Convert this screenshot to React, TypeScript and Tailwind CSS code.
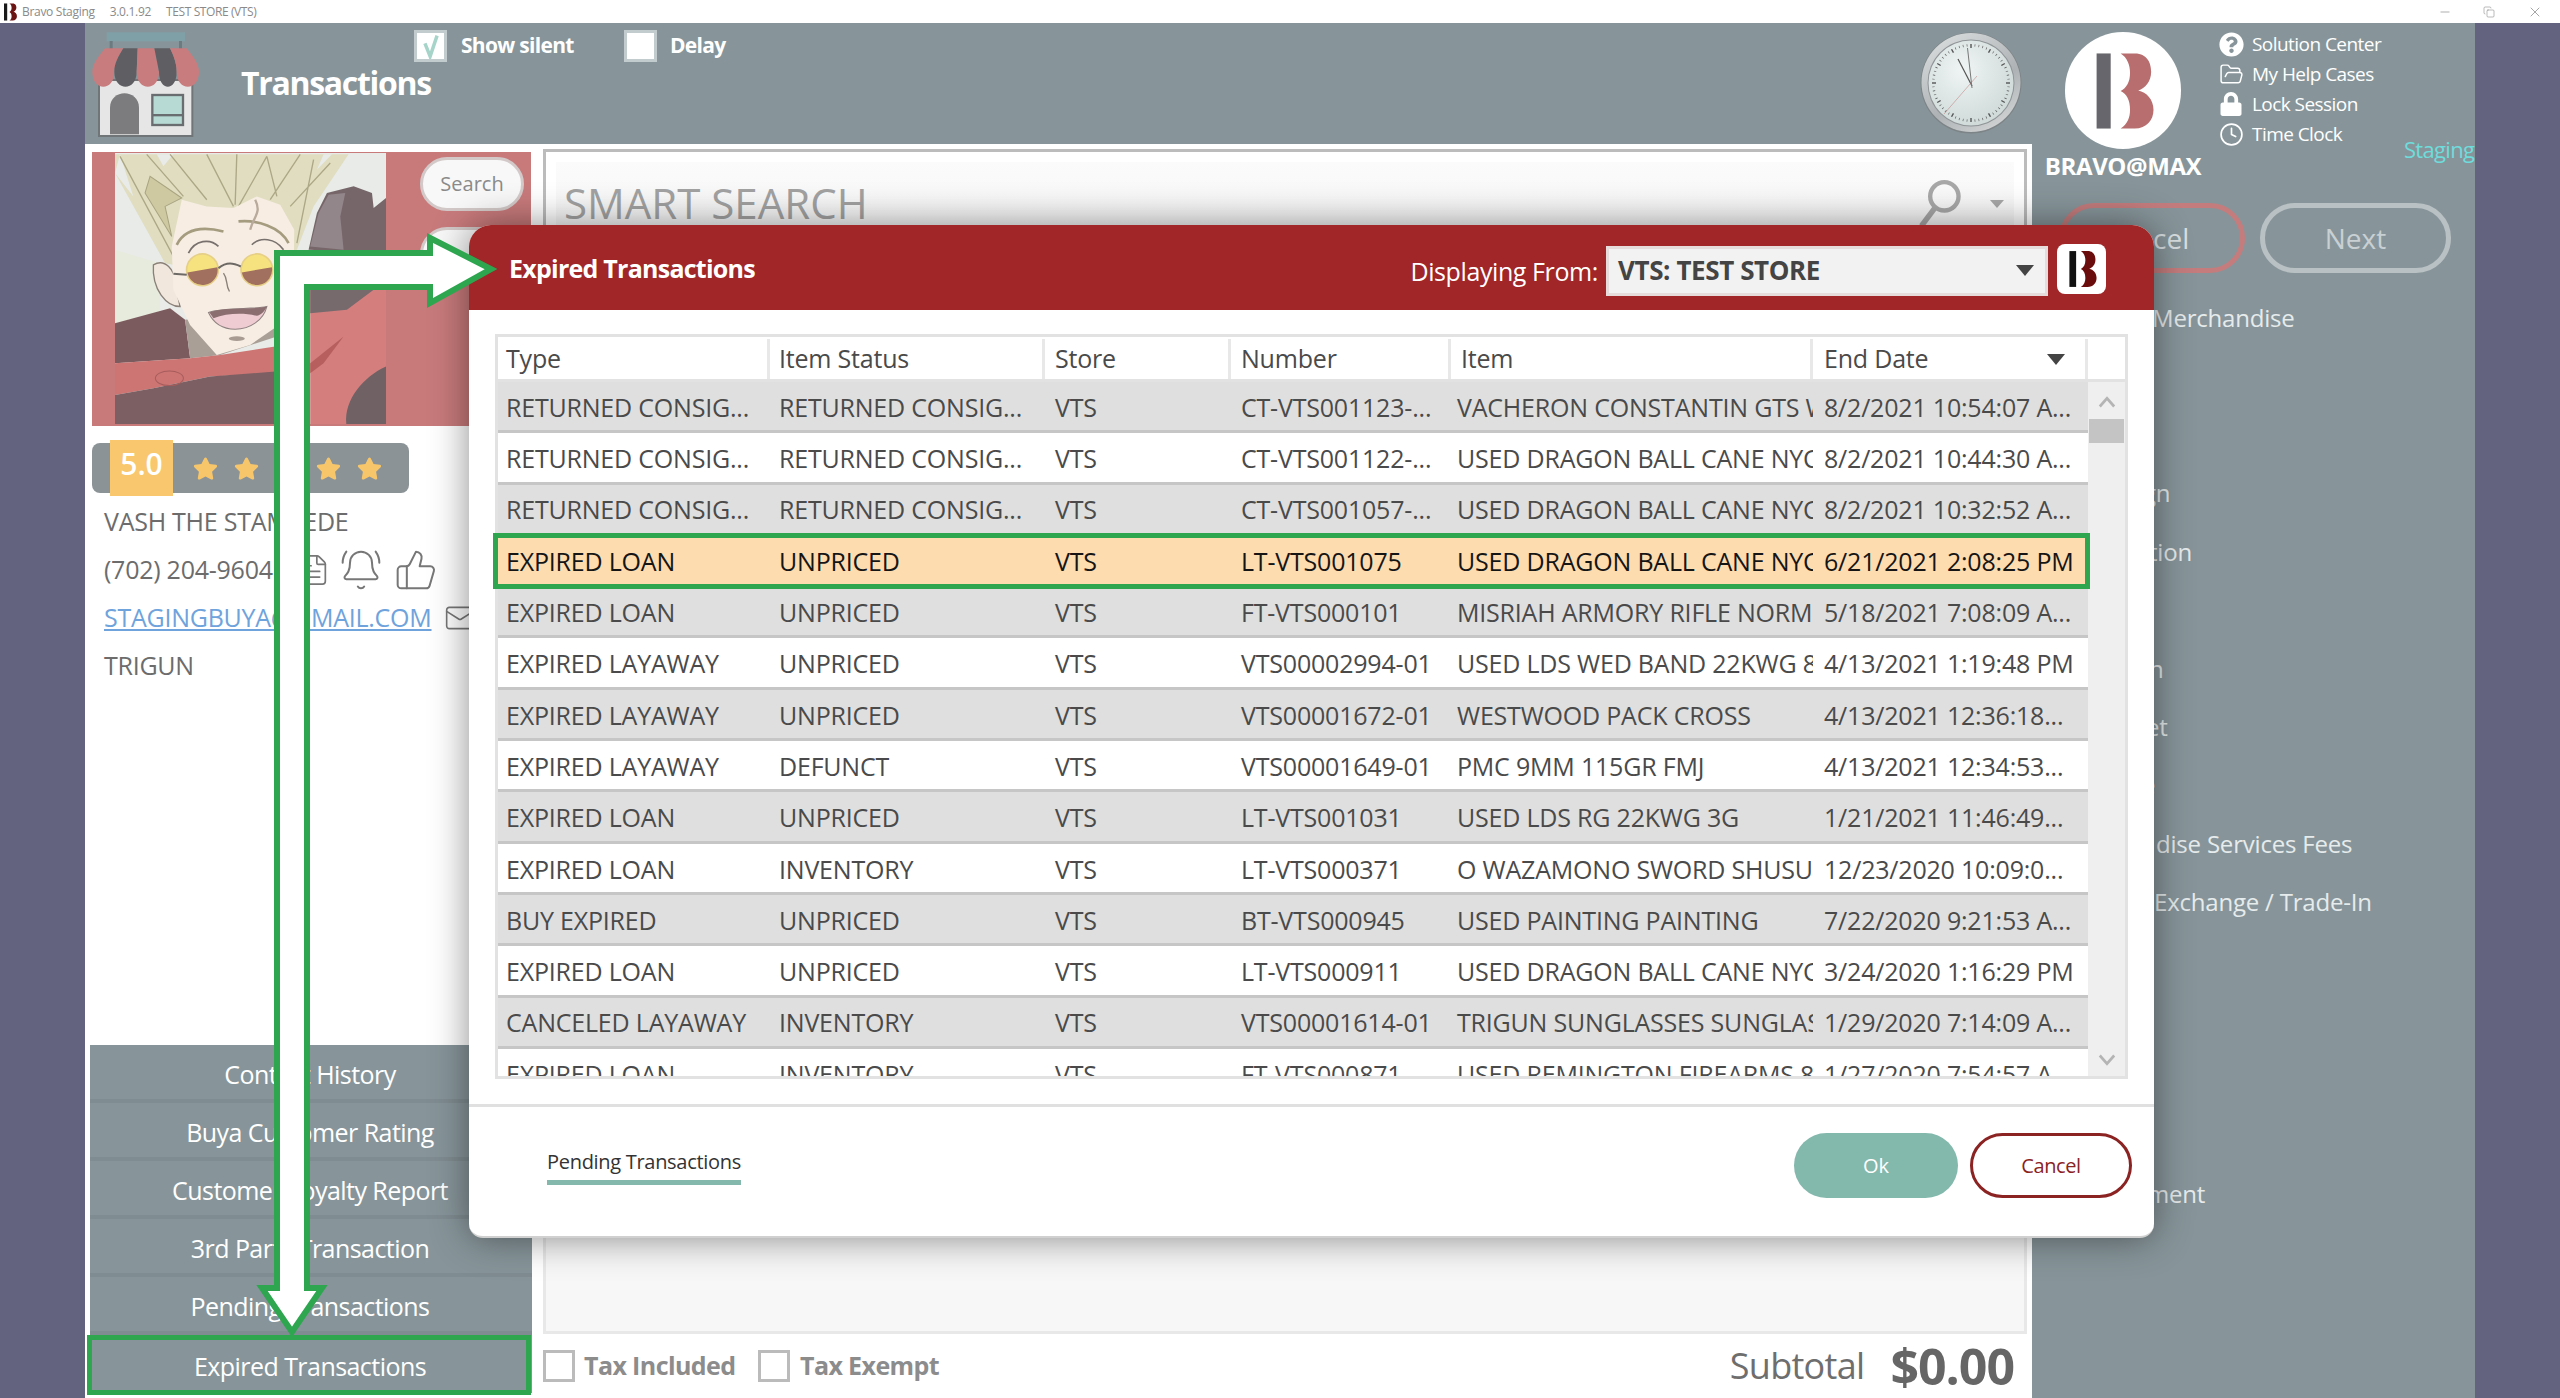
import React from "react";
import { BellRing, ThumbsUp, Mail, FileText, FolderOpen, Clock, Minus, X, Copy } from "lucide-react";
import { FaQuestionCircle, FaLock, FaStar } from "react-icons/fa";

const cols = ["w-[272px] pl-[8px]", "w-[275px] pl-[9px]", "w-[186px] pl-[10px]", "w-[220px] pl-[10px]", "w-[362px] pl-[6px]", "w-[275px] pl-[11px]"];

const rows: string[][] = [
  ["RETURNED CONSIG...", "RETURNED CONSIG...", "VTS", "CT-VTS001123-...", "VACHERON CONSTANTIN GTS WATCH", "8/2/2021 10:54:07 A..."],
  ["RETURNED CONSIG...", "RETURNED CONSIG...", "VTS", "CT-VTS001122-...", "USED DRAGON BALL CANE NYC STICK", "8/2/2021 10:44:30 A..."],
  ["RETURNED CONSIG...", "RETURNED CONSIG...", "VTS", "CT-VTS001057-...", "USED DRAGON BALL CANE NYC STICK", "8/2/2021 10:32:52 A..."],
  ["EXPIRED LOAN", "UNPRICED", "VTS", "LT-VTS001075", "USED DRAGON BALL CANE NYC STICK", "6/21/2021 2:08:25 PM"],
  ["EXPIRED LOAN", "UNPRICED", "VTS", "FT-VTS000101", "MISRIAH ARMORY RIFLE NORM AR15", "5/18/2021 7:08:09 A..."],
  ["EXPIRED LAYAWAY", "UNPRICED", "VTS", "VTS00002994-01", "USED LDS WED BAND 22KWG 8G", "4/13/2021 1:19:48 PM"],
  ["EXPIRED LAYAWAY", "UNPRICED", "VTS", "VTS00001672-01", "WESTWOOD PACK CROSS", "4/13/2021 12:36:18..."],
  ["EXPIRED LAYAWAY", "DEFUNCT", "VTS", "VTS00001649-01", "PMC 9MM 115GR FMJ", "4/13/2021 12:34:53..."],
  ["EXPIRED LOAN", "UNPRICED", "VTS", "LT-VTS001031", "USED LDS RG 22KWG 3G", "1/21/2021 11:46:49..."],
  ["EXPIRED LOAN", "INVENTORY", "VTS", "LT-VTS000371", "O WAZAMONO SWORD SHUSUI BLADE", "12/23/2020 10:09:0..."],
  ["BUY EXPIRED", "UNPRICED", "VTS", "BT-VTS000945", "USED PAINTING PAINTING", "7/22/2020 9:21:53 A..."],
  ["EXPIRED LOAN", "UNPRICED", "VTS", "LT-VTS000911", "USED DRAGON BALL CANE NYC STICK", "3/24/2020 1:16:29 PM"],
  ["CANCELED LAYAWAY", "INVENTORY", "VTS", "VTS00001614-01", "TRIGUN SUNGLASSES SUNGLASSES", "1/29/2020 7:14:09 A..."],
  ["EXPIRED LOAN", "INVENTORY", "VTS", "FT-VTS000871", "USED REMINGTON FIREARMS 870 EXP", "1/27/2020 7:54:57 A..."],
];

const nav = ["Contact History", "Buya Customer Rating", "Customer Loyalty Report", "3rd Party Transaction", "Pending Transactions", "Expired Transactions"];

const sideList: [string, string][] = [
  ["Merchandise", "pl-[120px]"],
  ["", ""],
  ["", ""],
  ["gn", "pl-[111px]"],
  ["tion", "pl-[117px]"],
  ["", ""],
  ["n", "pl-[117px]"],
  ["et", "pl-[114px]"],
  ["e", "pl-[110px]"],
  ["dise Services Fees", "pl-[124px]"],
  ["Exchange / Trade-In", "pl-[122px]"],
  ["", ""],
  ["", ""],
  ["", ""],
  ["", ""],
  ["ment", "pl-[115px]"],
];

function BLogo({ bar, b, className }: { bar: string; b: string; className?: string }) {
  return (
    <svg viewBox="0 0 240 300" className={className}>
      <rect x="30" y="22" width="48" height="256" fill={bar} />
      <path
        d="M112 22 H160 C205 22 216 58 216 84 C216 118 195 140 172 148 C200 154 224 178 224 214 C224 250 200 278 160 278 H112 C136 262 144 240 144 214 C144 180 132 160 112 150 C132 140 144 120 144 88 C144 60 134 36 112 22 Z"
        fill={b}
      />
    </svg>
  );
}

function StoreIcon() {
  return (
    <svg viewBox="0 0 390 360" className="w-[130px] h-[120px] -ml-[5px] -mt-[7px]" preserveAspectRatio="none">
      <rect x="65" y="22" width="235" height="27" fill="#7fa0a6" />
      <rect x="74" y="48" width="9" height="24" fill="#6b7b80" />
      <rect x="282" y="48" width="9" height="24" fill="#6b7b80" />
      <rect x="42" y="165" width="280" height="168" fill="#e6e6e6" stroke="#707678" strokeWidth="6" />
      <path d="M75 328 V248 C75 190 162 190 162 248 V328 Z" fill="#7c7c7e" />
      <rect x="202" y="210" width="92" height="90" fill="#b8dad4" stroke="#6a6d70" strokeWidth="7" />
      <rect x="202" y="267" width="92" height="7" fill="#6a6d70" />
      <path d="M60 70 H115 C100 95 90 115 88 140 C88 200 22 200 22 140 C22 115 45 90 60 70 Z" fill="#c97c7e" />
      <path d="M115 70 H158 L155 140 C155 200 88 200 88 140 C88 115 100 95 115 70 Z" fill="#5f5f63" />
      <path d="M158 70 H208 L222 140 C222 200 155 200 155 140 Z" fill="#c97c7e" />
      <path d="M208 70 H255 C265 90 275 115 275 140 C275 200 222 200 222 140 Z" fill="#5f5f63" />
      <path d="M255 70 H305 C320 90 342 115 342 140 C342 200 275 200 275 140 C275 115 265 90 255 70 Z" fill="#c97c7e" />
    </svg>
  );
}

function ClockFace() {
  const ticks = Array.from({ length: 60 }, (_, i) => i);
  return (
    <svg viewBox="0 0 102 102" className="w-[102px] h-[102px]">
      <defs>
        <linearGradient id="rim" x1="0.2" y1="0" x2="0.8" y2="1">
          <stop offset="0" stopColor="#d9dcdd" />
          <stop offset="0.6" stopColor="#aeb2b4" />
          <stop offset="1" stopColor="#d4d6d7" />
        </linearGradient>
        <radialGradient id="face" cx="0.4" cy="0.35" r="0.8">
          <stop offset="0" stopColor="#eff5f4" />
          <stop offset="1" stopColor="#c9d5d4" />
        </radialGradient>
      </defs>
      <circle cx="51" cy="51" r="50.5" fill="#7d8487" />
      <circle cx="51" cy="50.5" r="49.5" fill="url(#rim)" />
      <circle cx="51" cy="51" r="43.5" fill="#8f9496" />
      <circle cx="51" cy="51" r="42.5" fill="url(#face)" />
      {ticks.map((i) => (
        <rect key={i} x={i % 5 === 0 ? 50.3 : 50.7} y="12" width={i % 5 === 0 ? 1.4 : 0.6} height={i % 5 === 0 ? 4 : 2.4} fill="#555" transform={`rotate(${i * 6} 51 51)`} />
      ))}
      <line x1="52" y1="54" x2="38" y2="27" stroke="#555" strokeWidth="1.2" />
      <line x1="52" y1="56" x2="47.5" y2="16" stroke="#777" strokeWidth="1" />
      <line x1="57" y1="44" x2="24" y2="82" stroke="#b77" strokeWidth="0.5" />
    </svg>
  );
}

function Photo() {
  return (
    <svg viewBox="15 10 812 812" className="w-[271px] h-[271px]">
      <rect x="15" y="10" width="812" height="812" fill="#e8ebe8" />
      <path d="M15 300 L150 340 V500 L15 525 Z" fill="#e6ebde" />
      <path d="M595 300 L620 190 L650 130 L730 110 L785 130 L790 175 L827 145 V310 Z" fill="#76666a" />
      <path d="M600 290 L625 190 L655 135 L705 130 L690 200 L700 300 Z" fill="#93868a" />
      <path d="M165 340 L15 70 L15 14 L715 14 L610 170 L560 300 L190 345 Z" fill="#e0ddc0" />
      <path d="M15 70 L70 140 L30 14 Z M140 14 L160 50 L190 14 Z M640 14 L620 60 L665 14 Z" fill="#e8ebe8" />
      <path d="M120 80 L105 130 L185 260 L165 170 L215 145 Z" fill="#cfc9a2" stroke="#a9a480" strokeWidth="3" />
      <path d="M30 20 L190 320 M110 14 L220 140 M180 14 L290 150 M290 14 L370 170 M380 14 L375 165 M470 20 L500 140 M470 20 L385 170 M570 14 L480 150 M660 40 L540 170 M610 30 L560 280" stroke="#aca784" strokeWidth="4" fill="none" />
      <path d="M15 520 L180 475 L225 510 L240 625 L15 640 Z" fill="#7c5b5e" />
      <path d="M130 345 C165 325 195 360 195 400 L210 470 C170 470 125 420 130 345 Z" fill="#f2e7dd" stroke="#8a8078" strokeWidth="4" />
      <path d="M225 510 L240 625 L330 615 L500 560 V470 Z" fill="#a99f97" />
      <path d="M215 150 L290 170 L370 175 L440 140 L510 165 L552 240 L550 460 L500 530 L420 585 L320 615 L240 525 L190 420 L185 290 Z" fill="#f7ede3" />
      <path d="M200 285 C225 235 280 230 340 245 M385 215 C440 210 510 230 535 280" stroke="#a59c80" strokeWidth="8" fill="none" />
      <path d="M235 310 C255 270 300 265 325 290 M425 285 C450 260 495 265 520 300" stroke="#77706c" strokeWidth="5" fill="none" />
      <path d="M435 150 C455 190 430 200 420 240" stroke="#b8ab9b" strokeWidth="7" fill="none" />
      <circle cx="277" cy="360" r="50" fill="#e6cf87" />
      <circle cx="277" cy="360" r="45" fill="#f6e27e" />
      <path d="M232 368 L322 352 A45 45 0 0 1 232 368 Z" fill="#a2705e" />
      <circle cx="440" cy="360" r="50" fill="#e6cf87" />
      <circle cx="440" cy="360" r="45" fill="#f6e27e" />
      <path d="M395 368 L485 352 A45 45 0 0 1 395 368 Z" fill="#a2705e" />
      <path d="M325 355 C350 335 370 340 392 350 M190 372 L230 375" stroke="#6d6a66" strokeWidth="6" fill="none" />
      <path d="M340 370 C355 390 345 405 358 425" stroke="#8a8078" strokeWidth="4" fill="none" />
      <path d="M295 488 C340 470 430 480 470 470 C460 510 420 538 375 538 C335 538 310 520 295 488 Z" fill="#efccd2" stroke="#8e8280" strokeWidth="3" />
      <path d="M298 488 C340 470 430 480 470 470 C462 488 452 495 440 498 C400 488 350 490 310 505 Z" fill="#8b6e70" />
      <ellipse cx="380" cy="566" rx="24" ry="7" fill="#a89b92" />
      <path d="M15 640 L240 625 L330 615 L495 590 V670 L300 680 L130 715 L15 735 Z" fill="#cc7573" />
      <path d="M15 735 L130 715 L300 680 L495 665 V822 H15 Z" fill="#7c5f62" />
      <ellipse cx="178" cy="685" rx="42" ry="22" fill="none" stroke="#a75c5c" strokeWidth="3" />
      <path d="M600 420 H827 V822 H600 Z" fill="#d47f7e" />
      <path d="M600 420 H790 L710 480 L600 490 Z" fill="#776a6d" />
      <path d="M827 650 C760 680 700 750 708 822 H827 Z" fill="#6f6164" />
      <path d="M600 640 L700 560 L640 640 L600 670 Z" fill="#b65f5e" />
    </svg>
  );
}

function Check({ className = "", on = false }: { className?: string; on?: boolean }) {
  return (
    <div className={`flex items-center justify-center bg-white ${className}`}>
      {on && (
        <svg viewBox="0 0 30 30" className="w-[26px] h-[26px]">
          <path d="M8 12 L14 27 L22 3" fill="none" stroke="#a6d4c9" strokeWidth="4" />
        </svg>
      )}
    </div>
  );
}

export default function App() {
  return (
    <div className="relative w-[2560px] h-[1398px] overflow-hidden bg-[#63637f] font-['Open_Sans',sans-serif]">
      {/* Title bar */}
      <div className="flex h-[23px] items-center bg-white text-[#8a8a8a]">
        <BLogo bar="#1a1a1a" b="#6b1414" className="ml-[2px] w-[16px] h-[20px]" />
        <span className="ml-[4px] text-[12px] tracking-[-0.3px]">Bravo Staging</span>
        <span className="ml-[15px] text-[12px] tracking-[-0.3px]">3.0.1.92</span>
        <span className="ml-[15px] text-[12px] tracking-[-0.4px]">TEST STORE (VTS)</span>
        <div className="ml-auto flex items-center text-[#777]">
          <Minus size={14} strokeWidth={1} className="mr-[31px]" />
          <Copy size={12} strokeWidth={1} className="mr-[32px]" />
          <X size={16} strokeWidth={1} className="mr-[17px]" />
        </div>
      </div>

      <div className="flex h-[1375px] pl-[85px] pr-[85px]">
        {/* Left + centre */}
        <div className="flex flex-col w-[1947px]">
          {/* Header */}
          <div className="flex h-[121px] bg-[#87959a]">
            <div className="ml-[5px] mt-[9px] w-[108px]">
              <StoreIcon />
            </div>
            <div className="ml-[43px] flex flex-col">
              <div className="flex items-center pl-[173px] pt-[7px] h-[39px]">
                <Check on className="w-[33px] h-[32px] border-[3px] border-[#c2cbce]" />
                <span className="ml-[14px] w-[163px] text-[21px] font-bold text-white tracking-[-0.7px]">Show silent</span>
                <Check className="w-[33px] h-[32px] border-[3px] border-[#c2cbce]" />
                <span className="ml-[13px] text-[21px] font-bold text-white tracking-[-0.7px]">Delay</span>
              </div>
              <div className="text-[32px] leading-[42px] font-bold text-white tracking-[-1.3px]">Transactions</div>
            </div>
            <div className="ml-auto mr-[10px] mt-[9px]">
              <ClockFace />
            </div>
          </div>

          {/* Body */}
          <div className="flex flex-1 bg-white">
            {/* Left panel */}
            <div className="flex flex-col w-[452px]">
              <div className="ml-[7px] mt-[8px] flex w-[439px] h-[274px] bg-[#c87a7b]">
                <div className="ml-[23px] mt-[1px]">
                  <Photo />
                </div>
                <div className="ml-[34px] mt-[5px] flex flex-col gap-[16px]">
                  <div className="flex items-center justify-center w-[104px] h-[54px] rounded-full bg-[#f8f8f8] border-[3px] border-[#d3c9c9] text-[20px] text-[#8a8a8a]">Search</div>
                  <div className="w-[104px] h-[54px] rounded-full bg-[#f8f8f8] border-[3px] border-[#d3c9c9]" />
                </div>
              </div>

              <div className="relative ml-[7px] mt-[17px] flex items-center w-[317px] h-[50px] rounded-[8px] bg-[#8b9397]">
                <div className="absolute left-[18px] -top-[3px] flex items-center justify-center w-[63px] h-[56px] pb-[10px] bg-[#f9c76e] text-[30px] font-semibold text-white">5.0</div>
                <div className="flex items-center gap-[16px] pl-[101px] text-[#f8c66a]">
                  <FaStar size={25} />
                  <FaStar size={25} />
                  <FaStar size={25} />
                  <FaStar size={25} />
                  <FaStar size={25} />
                </div>
              </div>

              <div className="mt-[5px] pl-[19px] text-[25px] text-[#6c6c6c] tracking-[-0.25px]">
                <div className="flex items-center h-[48px]">VASH THE STAMPEDE</div>
                <div className="flex items-center h-[48px]">
                  <span>(702) 204-9604</span>
                  <FileText size={34} strokeWidth={1.2} className="ml-[24px] text-[#777]" />
                  <BellRing size={44} strokeWidth={1.1} className="ml-[8px] text-[#777]" />
                  <ThumbsUp size={44} strokeWidth={1.1} className="ml-[11px] text-[#777]" />
                </div>
                <div className="flex items-center h-[48px]">
                  <span className="w-[340px] text-[#6fa3dc] underline">STAGINGBUYA@GMAIL.COM</span>
                  <Mail size={32} strokeWidth={1.2} className="text-[#777]" />
                </div>
                <div className="flex items-center h-[48px]">TRIGUN</div>
              </div>

              <div className="mt-auto mb-[5px] mx-[5px] flex flex-col">
                {nav.map((n, i) => (
                  <div key={n} className={`relative flex items-center justify-center h-[58px] pt-[6px] pr-[2px] bg-[#87959a] text-[25px] text-white tracking-[-0.55px] ${i < 5 ? "border-b-[4px] border-[#7f8c91]" : ""}`}>
                    {n}
                    {i === 5 && <div className="absolute -left-[3px] right-[1px] top-0 -bottom-[2px] border-[5px] border-[#2ea650]" />}
                  </div>
                ))}
              </div>
            </div>

            {/* Centre */}
            <div className="flex flex-col w-[1495px] pl-[6px] pr-[5px] pt-[5px]">
              <div className="h-[150px] border-[3px] border-[#bcbcbc] p-[10px]">
                <div className="flex h-[126px] bg-gradient-to-b from-[#fbfbfb] to-[#f2f2f2]">
                  <div className="pl-[8px] pt-[9px] text-[42px] text-[#a2a2a2]">SMART SEARCH</div>
                  <svg viewBox="0 0 40 44" className="ml-auto mt-[18px] w-[44px] h-[48px]">
                    <circle cx="24" cy="15" r="13" fill="none" stroke="#a8a8a8" strokeWidth="4" />
                    <line x1="15" y1="26" x2="3" y2="42" stroke="#a8a8a8" strokeWidth="5" />
                  </svg>
                  <svg viewBox="0 0 14 8" className="ml-[28px] mr-[10px] mt-[38px] w-[14px] h-[8px]">
                    <path d="M0 0 H14 L7 8 Z" fill="#a8a8a8" />
                  </svg>
                </div>
              </div>
              <div className="flex-1 bg-[#f7f7f7] border-[3px] border-[#e8e8e8]" />
              <div className="flex items-center h-[64px] shrink-0">
                <Check className="w-[32px] h-[32px] border-[3px] border-[#bbbbbb]" />
                <span className="ml-[9px] w-[174px] text-[25px] font-bold text-[#8c8c8c] tracking-[-0.6px]">Tax Included</span>
                <Check className="w-[32px] h-[32px] border-[3px] border-[#bbbbbb]" />
                <span className="ml-[10px] text-[25px] font-bold text-[#8c8c8c] tracking-[-0.6px]">Tax Exempt</span>
                <span className="ml-auto text-[36px] text-[#6e6e6e] tracking-[-0.7px]">Subtotal</span>
                <span className="ml-[26px] mr-[13px] text-[50px] font-bold text-[#666] tracking-[-1px]">$0.00</span>
              </div>
            </div>
          </div>
        </div>

        {/* Right column */}
        <div className="flex flex-col w-[443px] bg-[#87959a]">
          <div className="flex h-[180px] shrink-0">
            <div className="ml-[14px] flex flex-col items-center w-[154px]">
              <div className="mt-[9px] flex items-center justify-center w-[116px] h-[117px] rounded-full bg-white">
                <BLogo bar="#66666c" b="#b86e6e" className="w-[78px] h-[88px]" />
              </div>
              <div className="mt-[2px] text-[24px] leading-[30px] font-bold text-white tracking-[-0.4px]">BRAVO@MAX</div>
            </div>
            <div className="ml-[19px] w-[185px] pt-[6px] text-[19px] text-white tracking-[-0.55px]">
              <div className="flex items-center h-[30.2px]"><FaQuestionCircle size={25} /><span className="ml-[8px]">Solution Center</span></div>
              <div className="flex items-center h-[30.2px]"><FolderOpen size={25} strokeWidth={1.4} /><span className="ml-[8px]">My Help Cases</span></div>
              <div className="flex items-center h-[30.2px]"><FaLock size={24} /><span className="ml-[9px]">Lock Session</span></div>
              <div className="flex items-center h-[30.2px]"><Clock size={25} strokeWidth={1.6} /><span className="ml-[8px]">Time Clock</span></div>
            </div>
            <div className="w-[71px] pt-[110px] text-[22px] text-[#6fdcdc] tracking-[-0.7px]">Staging</div>
          </div>
          <div className="flex gap-[15px] pl-[27px]">
            <div className="flex items-center justify-center w-[186px] h-[70px] pr-[12px] rounded-full border-[5px] border-[#c47c7d] text-[28px] text-[#d9dfe1]">Cancel</div>
            <div className="flex items-center justify-center w-[191px] h-[70px] rounded-full border-[5px] border-[#b9c1c4] text-[28px] text-[#c9d0d3]">Next</div>
          </div>
          <div className="mt-[16px] flex flex-col text-[24px] text-[#e6ebec] tracking-[-0.2px]">
            {sideList.map(([t, p], i) => (
              <div key={i} className={`flex items-center h-[58.4px] whitespace-nowrap ${p}`}>{t}</div>
            ))}
          </div>
        </div>
      </div>

      {/* Dialog */}
      <div className="absolute left-[469px] top-[225px] z-10 flex flex-col w-[1685px] h-[1013px] rounded-t-[22px] rounded-b-[14px] bg-white border-b-[2px] border-[#d0d0d0] shadow-[0_0_38px_rgba(0,0,0,0.45)]">
        <div className="flex items-center h-[85px] rounded-t-[22px] bg-[#a02628] text-white">
          <span className="ml-[40px] pt-[3px] text-[25px] font-bold tracking-[-0.75px]">Expired Transactions</span>
          <span className="ml-auto pt-[8px] text-[25px] tracking-[-0.4px]">Displaying From:</span>
          <div className="ml-[8px] mt-[6px] flex items-center w-[442px] h-[50px] bg-[#f2f2f2] border-[3px] border-[#e6dcdc] pl-[9px] pr-[11px]">
            <span className="text-[26px] font-bold text-[#444] tracking-[-0.4px]">VTS: TEST STORE</span>
            <svg viewBox="0 0 18 11" className="ml-auto w-[18px] h-[11px]"><path d="M0 0 H18 L9 11 Z" fill="#444" /></svg>
          </div>
          <div className="ml-[9px] mr-[48px] mt-[2px] flex items-center justify-center w-[49px] h-[50px] rounded-[8px] bg-white">
            <BLogo bar="#111" b="#6b0c0c" className="w-[40px] h-[42px]" />
          </div>
        </div>

        {/* Table */}
        <div className="ml-[26px] mt-[24px] flex flex-col w-[1633px] h-[745px] border-[3px] border-[#e2e2e2] text-[25px] text-[#4a4a4a] tracking-[-0.2px]">
          <div className="flex shrink-0 h-[45px] pt-[2px] border-b-[3px] border-[#e2e2e2]">
            {["Type", "Item Status", "Store", "Number", "Item", "End Date"].map((h, i) => (
              <div key={h} className={`flex items-center border-r-[3px] border-[#e8e8e8] ${cols[i]} ${i === 4 ? "pl-[10px]" : ""} ${i === 5 ? "pl-[9px] relative" : ""}`}>
                {h}
                {i === 5 && (
                  <svg viewBox="0 0 18 11" className="absolute right-[20px] top-[15px] w-[18px] h-[11px]"><path d="M0 0 H18 L9 11 Z" fill="#444" /></svg>
                )}
              </div>
            ))}
          </div>
          <div className="flex flex-1 min-h-0">
            <div className="w-[1590px] overflow-x-visible overflow-y-clip">
              {rows.map((r, i) => {
                const hi = i === 3;
                const bg = hi ? "bg-[#fddcb0] text-[#151515] border-[#e3d2b4]" : i % 2 === 0 ? "bg-[#dfdfdf] border-[#c6c6c6]" : "bg-white border-[#c6c6c6]";
                return (
                  <div key={i} className={`relative flex items-center h-[51.3px] pt-[3px] border-b-[3px] ${bg}`}>
                    {r.map((c, j) => (
                      <div key={j} className={`overflow-hidden whitespace-nowrap ${cols[j]}`}>{c}</div>
                    ))}
                    {hi && <div className="absolute -left-[5px] -right-[2px] -top-[3px] -bottom-[5px] z-10 border-[5px] border-[#2ea650]" />}
                  </div>
                );
              })}
            </div>
            <div className="flex flex-col items-center w-[37px] bg-[#efefef] pt-[14px]">
              <svg viewBox="0 0 20 12" className="w-[18px] h-[12px]"><path d="M2 11 L10 2 L18 11" fill="none" stroke="#b4b4b4" strokeWidth="3" /></svg>
              <div className="mt-[11px] w-[35px] h-[24px] bg-[#c4c4c4]" />
              <svg viewBox="0 0 20 12" className="mt-auto mb-[10px] w-[18px] h-[12px]"><path d="M2 1 L10 10 L18 1" fill="none" stroke="#b4b4b4" strokeWidth="3" /></svg>
            </div>
          </div>
        </div>

        {/* Footer */}
        <div className="mt-[25px] flex-1 border-t-[3px] border-[#e0e0e0] flex">
          <div className="ml-[78px] mt-[41px] flex flex-col self-start">
            <span className="text-[20px] leading-[28px] text-[#333] tracking-[-0.3px]">Pending Transactions</span>
            <span className="mt-[4px] h-[5px] bg-[#85b8ad]" />
          </div>
          <div className="ml-auto mt-[26px] flex self-start gap-[12px] mr-[22px]">
            <div className="flex items-center justify-center w-[164px] h-[65px] rounded-full bg-[#83b8ad] text-[20px] text-white">Ok</div>
            <div className="flex items-center justify-center w-[162px] h-[65px] rounded-full border-[3px] border-[#8b2323] bg-white text-[20px] text-[#8b2323] tracking-[-0.4px]">Cancel</div>
          </div>
        </div>
      </div>

      {/* Annotation arrow */}
      <svg viewBox="0 0 2560 1398" className="absolute left-0 top-0 z-20 w-[2560px] h-[1398px] pointer-events-none">
        <path d="M277 253 H430 V238 L491 269 L430 303 V287 H307 V1288 H322 L292 1332 L262 1288 H277 Z" fill="#fff" stroke="#2ea650" strokeWidth="6" />
      </svg>
    </div>
  );
}
